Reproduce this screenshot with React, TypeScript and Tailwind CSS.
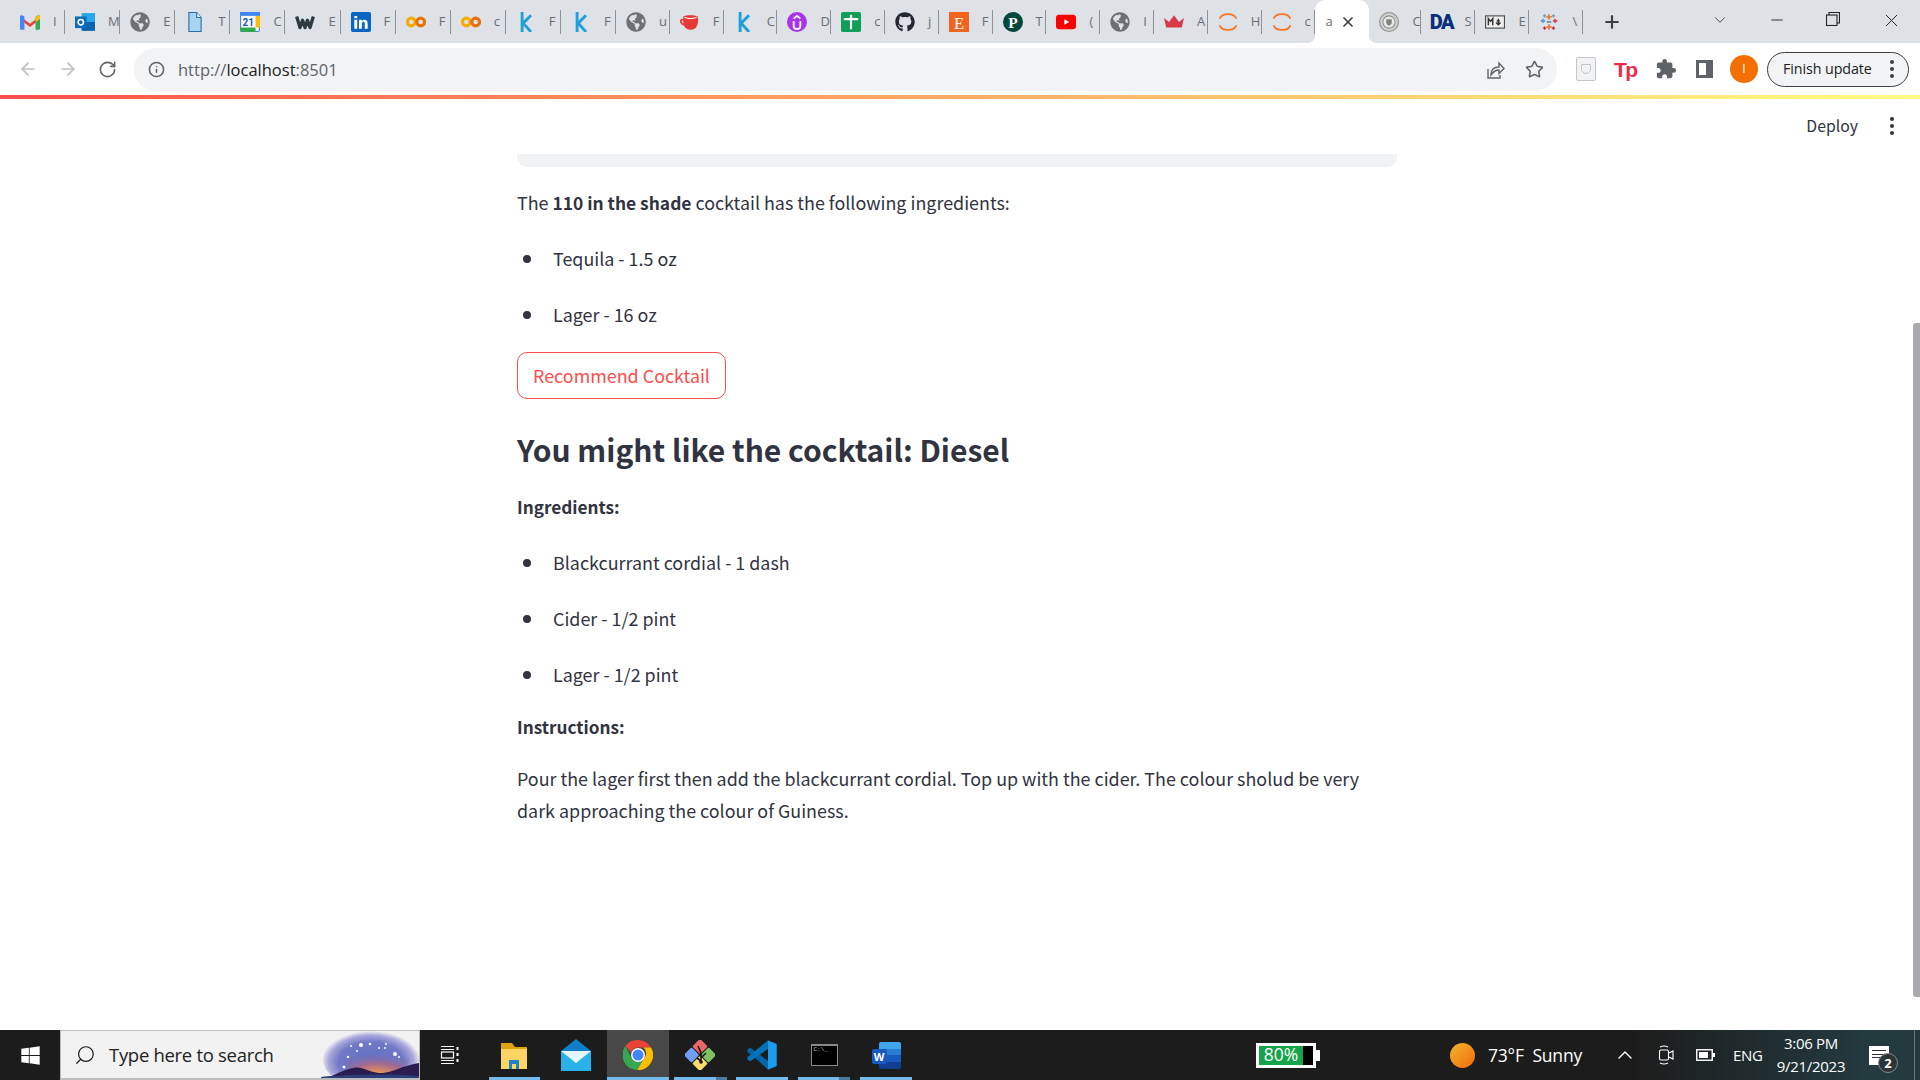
import type { ReactNode } from 'react'
import { ArrowLeft, ArrowRight, RotateCw, Info, Star, X, Plus, ChevronDown, ChevronUp, Minus, Search } from 'lucide-react'
import { FaGithub, FaWindows, FaGlobeAmericas } from 'react-icons/fa'
import { MdExtension } from 'react-icons/md'

const Globe = () => <FaGlobeAmericas className="text-[#6e7074]" size={20} />
const Box = ({ children }: { children: ReactNode }) => (
  <svg width="20" height="20" viewBox="0 0 18 18">{children}</svg>
)

const Kaggle = () => (
  <Box>
    <path d="M5.500 0v18M13.500 3 6.500 10l7 8M8.500 8l5-5" stroke="#20a0d6" strokeWidth="2.600" fill="none" />
  </Box>
)
const Colab = () => (
  <Box>
    <circle cx="4.800" cy="9" r="3.500" fill="none" stroke="#f9ab00" strokeWidth="2.800" />
    <circle cx="13.200" cy="9" r="3.500" fill="none" stroke="#e8710a" strokeWidth="2.800" />
  </Box>
)
const Jupyter = () => (
  <Box>
    <path d="M1.500 6c2-5.500 13-5.500 15 0M1.500 12c2 5.500 13 5.500 15 0" fill="none" stroke="#f37726" strokeWidth="1.600" />
  </Box>
)

const tabs: { icon: ReactNode; label: string }[] = [
  {
    label: 'I',
    icon: (
      <Box>
        <path d="M1 4.500 9 10.500l8-6v3L9 13.500l-8-6z" fill="#ea4335" />
        <path d="M0 4.500C0 3 1.500 2.500 3 3.500l1 .8V16H1.200A1.200 1.200 0 0 1 0 14.800z" fill="#4285f4" />
        <path d="M18 4.500C18 3 16.500 2.500 15 3.500l-1 .8V16h2.800a1.200 1.200 0 0 0 1.200-1.200z" fill="#34a853" />
        <path d="M14 4.300 15 3.500c1.500-1 3-.5 3 1v1.800l-4 3z" fill="#fbbc04" />
      </Box>
    ),
  },
  {
    label: 'M',
    icon: (
      <Box>
        <rect x="6" y="1" width="12" height="15" fill="#28a8ea" />
        <path d="M6 9h12v8H6z" fill="#0a64ad" />
        <rect x="0" y="4" width="10.500" height="10.500" fill="#0f6cbd" />
        <circle cx="5.200" cy="9.200" r="2.400" fill="none" stroke="#fff" strokeWidth="1.400" />
      </Box>
    ),
  },
  { label: 'E', icon: <Globe /> },
  {
    label: 'T',
    icon: (
      <Box>
        <path d="M3.500 0.500h7L14.500 5v12.500h-11z" fill="#a8d3f3" stroke="#2a6ea8" strokeWidth="1" />
        <path d="M10.500 0.500V5h4" fill="#eaf5fd" stroke="#2a6ea8" strokeWidth="1" />
      </Box>
    ),
  },
  {
    label: 'C',
    icon: (
      <Box>
        <rect x="0.500" y="0.500" width="17" height="17" rx="1.500" fill="#fff" stroke="#4285f4" />
        <path d="M0 0h18v3.500H0z" fill="#4285f4" />
        <path d="M0 14h14v4H2a2 2 0 0 1-2-2z" fill="#34a853" />
        <path d="M14 14h4V3.500h-4z" fill="#fbbc04" />
        <text x="7.500" y="12.500" fontSize="9" fontWeight="700" textAnchor="middle" fill="#1a56c4" fontFamily="Roboto, sans-serif">21</text>
      </Box>
    ),
  },
  {
    label: 'E',
    icon: (
      <Box>
        <path d="M1.500 4 4.500 14 6.800 7.500 9 14l2.200-6.500L13.500 14l3-10" fill="none" stroke="#2f3a40" strokeWidth="3" strokeLinejoin="round" />
      </Box>
    ),
  },
  {
    label: 'F',
    icon: (
      <Box>
        <rect width="18" height="18" rx="1.500" fill="#0a66c2" />
        <path d="M3 7h2.600v8H3zM3 3.500h2.600v2.200H3zM7.200 7h2.500v1.200c1.200-2 5.300-2 5.300 1.800v5h-2.600v-4.500c0-2.300-2.600-2.200-2.600 0V15H7.200z" fill="#fff" />
      </Box>
    ),
  },
  { label: 'F', icon: <Colab /> },
  { label: 'c', icon: <Colab /> },
  { label: 'F', icon: <Kaggle /> },
  { label: 'F', icon: <Kaggle /> },
  { label: 'u', icon: <Globe /> },
  {
    label: 'F',
    icon: (
      <Box>
        <path d="M3 4c3-1.500 10-1.500 13 0 1 7-1 12-6.500 12S2 11 3 4z" fill="#e53935" />
        <path d="M4 5c3 1 8 1 11 0" stroke="#fff" strokeWidth="1" fill="none" />
        <path d="M3 7C-1 6 0 11 5 12" stroke="#e53935" strokeWidth="1.500" fill="none" />
      </Box>
    ),
  },
  { label: 'C', icon: <Kaggle /> },
  {
    label: 'D',
    icon: (
      <Box>
        <circle cx="9" cy="9" r="9" fill="#a933ea" />
        <path d="M6 8v5c0 3 6 3 6 0V8M6 6l3-2.500L12 6" stroke="#fff" strokeWidth="1.600" fill="none" />
      </Box>
    ),
  },
  {
    label: 'c',
    icon: (
      <Box>
        <rect width="18" height="18" rx="1.500" fill="#0f9d58" />
        <path d="M9 2.500v13M2.500 6.500h13" stroke="#fff" strokeWidth="2" />
      </Box>
    ),
  },
  { label: 'j', icon: <FaGithub className="text-[#24292f]" size={20} /> },
  {
    label: 'F',
    icon: (
      <Box>
        <rect width="18" height="18" fill="#f1641e" />
        <text x="9" y="15" fontSize="15" textAnchor="middle" fill="#fff" fontFamily="Liberation Serif, serif">E</text>
      </Box>
    ),
  },
  {
    label: 'T',
    icon: (
      <Box>
        <circle cx="9" cy="9" r="9" fill="#00473e" />
        <text x="9" y="14" fontSize="14" fontWeight="700" textAnchor="middle" fill="#fff" fontFamily="Liberation Serif, serif">P</text>
      </Box>
    ),
  },
  {
    label: '(',
    icon: (
      <Box>
        <rect y="2.500" width="18" height="13" rx="3" fill="#f00" />
        <path d="M7.500 6.500v5L12 9z" fill="#fff" />
      </Box>
    ),
  },
  { label: 'I', icon: <Globe /> },
  {
    label: 'A',
    icon: (
      <Box>
        <path d="M0 5.500l4.500 3.500L9 3l4.500 6L18 5.500 16 14H2z" fill="#d93a4a" />
      </Box>
    ),
  },
  { label: 'H', icon: <Jupyter /> },
  { label: 'c', icon: <Jupyter /> },
]

const afterTabs: { icon: ReactNode; label: string }[] = [
  {
    label: 'C',
    icon: (
      <Box>
        <circle cx="9" cy="9" r="8.500" fill="#cfd1d0" stroke="#8f9390" />
        <circle cx="9" cy="9" r="5.500" fill="#e9eae8" stroke="#8f9390" />
        <path d="M6.500 6.500h5v3c0 2-2.500 3-2.500 3s-2.500-1-2.500-3z" fill="#80857f" />
      </Box>
    ),
  },
  {
    label: 'S',
    icon: <span className="font-['Roboto',sans-serif] font-black text-[20px] tracking-[-1.500px] text-[#0b2f7a] leading-none">DA</span>,
  },
  {
    label: 'E',
    icon: (
      <Box>
        <rect x="0.500" y="3.500" width="17" height="11" fill="#eee" stroke="#4a4a4a" />
        <path d="M3 12V6l2 2.500L7 6v6M12 6v5.500M10 9.500l2 2 2-2M10.500 8h3" stroke="#333" strokeWidth="1.300" fill="none" />
      </Box>
    ),
  },
  {
    label: '\\',
    icon: (
      <Box>
        <path d="M9 2v5M6.500 4.500h5M9 11v5M6.500 13.500h5" stroke="#e8762d" strokeWidth="1.500" />
        <path d="M3.500 6v4M1.500 8h4" stroke="#5a9bd4" strokeWidth="1.400" />
        <path d="M14.500 6v4M12.500 8h4" stroke="#d3455b" strokeWidth="1.400" />
        <path d="M5 2v3M3.500 3.500h3M13 2v3M11.500 3.500h3" stroke="#7099a6" strokeWidth="1.100" />
        <path d="M5 13v3M3.500 14.500h3M13 13v3M11.500 14.500h3" stroke="#c72035" strokeWidth="1.100" />
        <path d="M7 9h4" stroke="#59879b" strokeWidth="1.400" />
      </Box>
    ),
  },
]

function Tab({ icon, label, w }: { icon: ReactNode; label: string; w: string }) {
  return (
    <div className={`${w} h-[43px] shrink-0 flex items-center`}>
      <div className="w-[20px] ml-[10px] flex justify-center items-center shrink-0">{icon}</div>
      <span className="ml-[13px] w-[6px] text-[13px] text-[#6b6e72] leading-none">{label}</span>
      <span className="ml-auto w-px h-[24px] bg-[#8e9196]" />
    </div>
  )
}

function Bullet({ children }: { children: ReactNode }) {
  return (
    <li className="h-[32px] flex items-center">
      <span className="w-[8px] h-[8px] rounded-full bg-[#31333f] ml-[6px] mr-[22px] mt-[1px]" />
      {children}
    </li>
  )
}

function TaskIcon({ children, active, bar, stacked }: { children: ReactNode; active?: boolean; bar?: string; stacked?: boolean }) {
  return (
    <div className={`relative w-[62px] h-full flex items-center justify-center ${active ? 'bg-[#484848]' : ''}`}>
      {children}
      {bar && (
        <span className={`absolute bottom-0 h-[3px] bg-[#76b9ed] ${bar}`}>
          {stacked && <span className="absolute right-0 top-0 h-full w-[11px] bg-[#4a7a9e]" />}
        </span>
      )}
    </div>
  )
}

export default function App() {
  return (
    <div className="relative h-screen w-full overflow-hidden flex flex-col bg-white font-['Open_Sans',sans-serif]">
      {/* tab strip */}
      <div className="h-[43px] shrink-0 flex bg-[#dee1e6] pl-[10px]">
        {tabs.map((t, i) => (
          <Tab key={i} icon={t.icon} label={t.label} w={i < 11 ? 'w-[55.100px]' : 'w-[53.800px]'} />
        ))}
        <div className="relative w-[54px] h-[43px] shrink-0 bg-white rounded-t-[10px] flex items-center">
          <span className="absolute -left-[8px] bottom-0 w-[8px] h-[8px] bg-[radial-gradient(circle_at_0_0,#dee1e6_8px,#fff_8.500px)]" />
          <span className="absolute -right-[8px] bottom-0 w-[8px] h-[8px] bg-[radial-gradient(circle_at_100%_0,#dee1e6_8px,#fff_8.500px)]" />
          <span className="ml-[10px] w-[6px] text-[13px] text-[#6b6e72] leading-none">a</span>
          <X className="ml-[9px] text-[#3c4043]" size={16} strokeWidth={2.600} />
        </div>
        {afterTabs.map((t, i) => (
          <Tab key={i} icon={t.icon} label={t.label} w={i === 0 ? 'w-[52px]' : 'w-[54px]'} />
        ))}
        <Plus className="ml-[19px] mt-[12px] text-[#3c4043]" size={20} strokeWidth={2.600} />
        <ChevronDown className="ml-[89px] mt-[11px] text-[#3c4043]" size={18} strokeWidth={1.300} />
        <Minus className="ml-[39px] mt-[11px] text-[#222]" size={18} strokeWidth={1.200} />
        <svg className="ml-[40px] mt-[12px]" width="14" height="14" viewBox="0 0 14 14" fill="none" stroke="#222" strokeWidth="1.100">
          <rect x="0.500" y="3" width="10.500" height="10.500" />
          <path d="M3 3V0.500h10.500V11H11" />
        </svg>
        <X className="ml-[41px] mt-[10px] text-[#222]" size={21} strokeWidth={1.100} />
      </div>

      {/* toolbar */}
      <div className="h-[52px] shrink-0 flex items-center bg-white">
        <ArrowLeft className="ml-[18px] text-[#bcbec1]" size={20} strokeWidth={2} />
        <ArrowRight className="ml-[20px] text-[#bcbec1]" size={20} strokeWidth={2} />
        <RotateCw className="ml-[20px] text-[#5f6368]" size={19} strokeWidth={2} />
        <div className="ml-[17px] w-[1423px] h-[43px] mb-[-1px] rounded-full bg-[#f1f3f4] flex items-center">
          <Info className="ml-[14px] text-[#5f6368]" size={17} strokeWidth={2.200} />
          <span className="ml-[13px] mt-[1px] text-[16.500px] text-[#5f6368]">
            http://<span className="text-[#202124]">localhost</span>:8501
          </span>
          <svg className="ml-auto" width="20" height="20" viewBox="0 0 20 20" fill="none" stroke="#5f6368" strokeWidth="1.400">
            <path d="M3 9v9h12v-3" />
            <path d="M6 15c0-5 3-8 8-8V3l5 5.500-5 5V10c-4 0-6 2-8 5z" />
          </svg>
          <Star className="ml-[20px] mr-[13px] text-[#5f6368]" size={19} strokeWidth={2} />
        </div>
        <div className="ml-[19px] w-[20px] h-[24px] rounded-[2px] border border-[#c4c7ca] bg-[#f1f3f4] flex items-center justify-center">
          <span className="w-[10px] h-[10px] rounded-b-[5px] border border-[#c4c7ca]" />
        </div>
        <span className="ml-[18px] w-[20px] font-['Liberation_Sans',sans-serif] font-bold text-[21px] leading-none tracking-[-1.500px] text-[#ee2b47] whitespace-nowrap">Tp</span>
        <MdExtension className="ml-[21px] text-[#5f6368]" size={22} />
        <div className="ml-[19px] w-[17px] h-[18px] border-[3px] border-r-[7px] border-[#5f6368] bg-white" />
        <div className="ml-[17px] w-[28px] h-[28px] rounded-full bg-[#f26f00] flex items-center justify-center text-white text-[12px]">I</div>
        <div className="ml-[9px] w-[142px] h-[35px] rounded-full border border-[#3c4043] bg-[#f1f3f4] flex items-center">
          <span className="ml-[15px] text-[14.300px] text-[#202124] tracking-[-0.100px]">Finish update</span>
          <span className="ml-auto mr-[14px] flex flex-col gap-[3px]">
            <i className="block w-[4px] h-[4px] rounded-full bg-[#3c4043]" />
            <i className="block w-[4px] h-[4px] rounded-full bg-[#3c4043]" />
            <i className="block w-[4px] h-[4px] rounded-full bg-[#3c4043]" />
          </span>
        </div>
      </div>

      {/* streamlit loading bar */}
      <div className="h-[4px] shrink-0 bg-gradient-to-r from-[#ff4b4b] to-[#fffd80]" />

      {/* page */}
      <main className="relative flex-1 min-h-0 pr-[6px] font-['Noto_Sans_CJK_SC','Noto_Sans',sans-serif] text-[17.900px] leading-[32px] text-[#31333f]">
        <div className="h-[55px] pb-[2px] flex items-center justify-end">
          <span className="text-[#31333f] text-[15.800px] mr-[32px]">Deploy</span>
          <span className="mr-[20px] flex flex-col gap-[3px]">
            <i className="block w-[4px] h-[4px] rounded-full bg-[#31333f]" />
            <i className="block w-[4px] h-[4px] rounded-full bg-[#31333f]" />
            <i className="block w-[4px] h-[4px] rounded-full bg-[#31333f]" />
          </span>
        </div>
        <div className="mx-auto w-[880px]">
          <div className="h-[13px] rounded-b-[10px] bg-[#f0f2f6]" />
          <p className="mt-[19px]">
            The <strong className="font-bold text-[17.400px]">110 in the shade</strong> cocktail has the following ingredients:
          </p>
          <ul className="mt-[23px] flex flex-col gap-[24px]">
            <Bullet>Tequila - 1.5 oz</Bullet>
            <Bullet>Lager - 16 oz</Bullet>
          </ul>
          <button className="mt-[22px] h-[47px] w-[209px] pb-[2px] rounded-[10px] border border-[#ff4b4b] text-[#ff4b4b] bg-white">Recommend Cocktail</button>
          <h3 className="mt-[28px] h-[44px] flex items-center text-[30px] leading-[44px] font-semibold">You might like the cocktail: Diesel</h3>
          <p className="mt-[20px] font-semibold text-[17.200px]">Ingredients:</p>
          <ul className="mt-[23px] flex flex-col gap-[24px]">
            <Bullet>Blackcurrant cordial - 1 dash</Bullet>
            <Bullet>Cider - 1/2 pint</Bullet>
            <Bullet>Lager - 1/2 pint</Bullet>
          </ul>
          <p className="mt-[21px] font-semibold text-[17.200px]">Instructions:</p>
          <p className="mt-[19px]">
            Pour the lager first then add the blackcurrant cordial. Top up with the cider. The colour sholud be very dark approaching the colour of Guiness.
          </p>
        </div>
        <div className="absolute right-0 top-[224px] w-[7px] h-[674px] rounded-l-[3px] bg-[#a9a9ae]" />
      </main>

      {/* taskbar */}
      <div className="h-[50px] shrink-0 flex items-center bg-[linear-gradient(90deg,#1c1c1c_85%,#233a3e_97%)] text-white relative">
        <div className="w-[60px] h-full flex items-center justify-center">
          <FaWindows size={21} />
        </div>
        <div className="relative w-[360px] h-full bg-[#f2f2f2] border border-[#bdbdbd] border-b-2 flex items-center overflow-hidden">
          <Search className="ml-[13px] -scale-x-100 text-[#1a1a1a]" size={22} strokeWidth={1.300} />
          <span className="ml-[13px] text-[18.500px] text-[#222] tracking-[-0.300px]">Type here to search</span>
          <svg className="absolute right-0 top-0" width="98" height="48" viewBox="0 0 98 48">
            <defs>
              <radialGradient id="aura" cx="0.500" cy="0.550" r="0.520">
                <stop offset="0" stopColor="#5f70c4" />
                <stop offset="0.650" stopColor="#7079c6" />
                <stop offset="0.850" stopColor="#a9a6da" />
                <stop offset="1" stopColor="#f2f2f2" />
              </radialGradient>
              <radialGradient id="dusk" cx="0.500" cy="1" r="0.800">
                <stop offset="0" stopColor="#f5a14a" />
                <stop offset="0.500" stopColor="#a86a8c" />
                <stop offset="1" stopColor="#6a6fbe" stopOpacity="0" />
              </radialGradient>
            </defs>
            <ellipse cx="50" cy="28" rx="48" ry="30" fill="url(#aura)" />
            <ellipse cx="56" cy="30" rx="32" ry="14" fill="url(#dusk)" />
            <g fill="#fff">
              <circle cx="40" cy="14" r="2" />
              <circle cx="30" cy="15" r="1" />
              <circle cx="36" cy="20" r="1" />
              <circle cx="49" cy="13" r="1.200" />
              <circle cx="58" cy="17" r="1" />
              <circle cx="64" cy="17" r="1" />
              <circle cx="74" cy="23" r="2" />
              <circle cx="78" cy="26" r="1" />
              <circle cx="27" cy="26" r="1.200" />
              <circle cx="23" cy="36" r="1.500" />
              <circle cx="65" cy="13" r="1" />
            </g>
            <path d="M4 48c10-4 16-8 24-10 6-1.500 8-2 14-.5 6 2 12 5 20 4.500 8-1 14-4 20-6 5-1.500 11-3 16-4v16z" fill="#2a1d4e" />
            <path d="M0 48v-2c30-3 70-3 98-1v3z" fill="#2c3d78" />
          </svg>
        </div>
        <div className="w-[60px] flex justify-center">
          <svg width="20" height="20" viewBox="0 0 20 20" fill="none" stroke="#fff" strokeWidth="1.200">
            <path d="M1 1.500h13M1 4.500h13M1 15.500h13M1 18.500h13" />
            <rect x="1.500" y="7" width="12" height="6" />
            <path d="M17.500 2v3M17.500 8v3M17.500 14v3" strokeWidth="2" />
          </svg>
        </div>
        <div className="ml-[3px] h-full flex">
          <TaskIcon bar="left-[6px] right-[5px]">
            <svg width="28" height="30" viewBox="0 0 28 30">
              <path d="M1 3h11l3 4h12v6H1z" fill="#e0a412" />
              <path d="M1 9h26v20H1z" fill="#fcd562" />
              <path d="M9 29v-9h10v9h-3v-5h-4v5z" fill="#1e83c9" />
            </svg>
          </TaskIcon>
          <TaskIcon>
            <svg width="30" height="32" viewBox="0 0 30 32">
              <path d="M0 12 15 0l15 12v20H0z" fill="#0f7fca" />
              <path d="M0 12h30v20H0z" fill="#27b3ea" />
              <path d="M0 12l15 12 15-12H0z" fill="#e6f6fd" />
            </svg>
          </TaskIcon>
          <TaskIcon active bar="left-0 right-0">
            <svg width="30" height="30" viewBox="0 0 30 30">
              <path d="M15 0a15 15 0 0 1 13 7.500H15a7.500 7.500 0 0 0-7 5L2.500 6A15 15 0 0 1 15 0z" fill="#ea4335" />
              <path d="M28 7.500A15 15 0 0 1 14 30l6.500-11a7.500 7.500 0 0 0 0-11.500z" fill="#fbbc04" />
              <path d="M2.500 6 8.500 18.500A7.500 7.500 0 0 0 20.500 19L14 30A15 15 0 0 1 2.500 6z" fill="#34a853" />
              <circle cx="15" cy="15" r="7" fill="#fff" />
              <circle cx="15" cy="15" r="5.500" fill="#4285f4" />
            </svg>
          </TaskIcon>
          <TaskIcon bar="left-[5px] right-[4px]" stacked>
            <svg width="30" height="30" viewBox="0 0 30 30">
              <rect x="9.500" y="1" width="11" height="11" rx="1.500" fill="#e8686a" transform="rotate(45 15 6.500)" />
              <rect x="18" y="9.500" width="11" height="11" rx="1.500" fill="#7cc35f" transform="rotate(45 23.500 15)" />
              <rect x="9.500" y="18" width="11" height="11" rx="1.500" fill="#f6dc6e" transform="rotate(45 15 23.500)" />
              <rect x="1" y="9.500" width="11" height="11" rx="1.500" fill="#6f9ff5" transform="rotate(45 6.500 15)" />
              <path d="M13 6l3 7v8M21 13l-5 5M16 21l-4-3" stroke="#1a1a1a" strokeWidth="1.600" fill="none" />
              <circle cx="16" cy="22" r="1.800" fill="#1a1a1a" />
            </svg>
          </TaskIcon>
          <TaskIcon bar="left-[5px] right-[5px]">
            <svg width="30" height="30" viewBox="0 0 30 30">
              <path d="M21 0.500 29.500 4v22L21 29.500 7 16l14-15.500zM21 8.500 12.500 15l8.500 6.500z" fill="#0a8ad6" fillRule="evenodd" />
              <path d="M0.500 10.500 3 8.500l18 13.500v7.500L0.500 13z" fill="#0065a9" transform="translate(0 -1)" />
              <path d="M0.500 19.500 3 21.500 21 8.500V0.500L0.500 17z" fill="#0073bb" />
              <path d="M21 0.500 29.500 4v22L21 29.500z" fill="#1d9cec" />
            </svg>
          </TaskIcon>
          <TaskIcon bar="left-[5px] right-[5px]" stacked>
            <div className="w-[27px] h-[22px] bg-black border border-[#8a8a8a] border-t-[2px] pl-[2px] text-[6px] leading-[8px] text-[#ccc] font-['Liberation_Mono',monospace]">C:\_</div>
          </TaskIcon>
          <TaskIcon bar="left-[5px] right-[5px]">
            <div className="relative w-[29px] h-[27px] flex">
              <div className="ml-[7px] w-[22px] h-full rounded-[2px] bg-[linear-gradient(#41a5ee_25%,#2b7cd3_25%,#2b7cd3_50%,#185abd_50%,#185abd_75%,#103f91_75%)]" />
              <div className="absolute left-0 top-[7px] w-[15px] h-[15px] bg-[#185abd] rounded-[2px] flex items-center justify-center text-[11px] font-bold leading-none">W</div>
            </div>
          </TaskIcon>
        </div>
        <div className="ml-[339px] relative w-[60px] h-[25px] border-[3px] border-white bg-black">
          <div className="absolute inset-y-0 left-0 w-[44px] bg-[#16a34a] flex items-center justify-center text-[17.500px] leading-none">80%</div>
          <span className="absolute -right-[7px] top-[4px] w-[4px] h-[11px] bg-white" />
        </div>
        <div className="ml-[134px] w-[25px] h-[25px] rounded-full bg-gradient-to-br from-[#f2b42a] to-[#ee6a0c]" />
        <span className="ml-[13px] text-[17.500px] tracking-[-0.200px] whitespace-pre">73°F  Sunny</span>
        <ChevronUp className="absolute left-[1613px] text-white" size={24} strokeWidth={1.400} />
        <svg className="absolute left-[1658px]" width="16" height="20" viewBox="0 0 16 20" fill="none" stroke="#fff" strokeWidth="1.100">
          <path d="M2 2q4-2 8 0M2 18q4 2 8 0" />
          <rect x="1.500" y="5" width="9" height="10" rx="1.500" />
          <path d="M11 8l4-2v8l-4-2" />
        </svg>
        <svg className="absolute left-[1696px]" width="19" height="12" viewBox="0 0 19 12">
          <rect x="0.750" y="0.750" width="15.500" height="10.500" fill="none" stroke="#fff" strokeWidth="1.400" />
          <rect x="3" y="3" width="9" height="6" fill="#fff" />
          <rect x="17" y="4" width="2" height="4" fill="#fff" />
        </svg>
        <span className="absolute left-[1733px] text-[15px] tracking-[-0.300px]">ENG</span>
        <div className="absolute left-[1771px] w-[80px] text-center text-[15px] leading-[23px] tracking-[-0.300px]">
          <div>3:06 PM</div>
          <div>9/21/2023</div>
        </div>
        <div className="absolute left-[1869px] top-[16px] w-[20px] h-[19px] bg-white flex flex-col gap-[2.500px] pt-[4px] px-[3px]">
          <i className="block h-px bg-[#333]" />
          <i className="block h-px bg-[#333]" />
          <i className="block h-px bg-[#333]" />
        </div>
        <div className="absolute left-[1878px] top-[23px] w-[20px] h-[20px] rounded-full bg-[#2b3436] border border-[#888] flex items-center justify-center text-[13px] font-bold leading-none">2</div>
        <div className="absolute right-0 inset-y-0 w-[6px] border-l border-[#6b7476] bg-[#233a3e]" />
      </div>
    </div>
  )
}
